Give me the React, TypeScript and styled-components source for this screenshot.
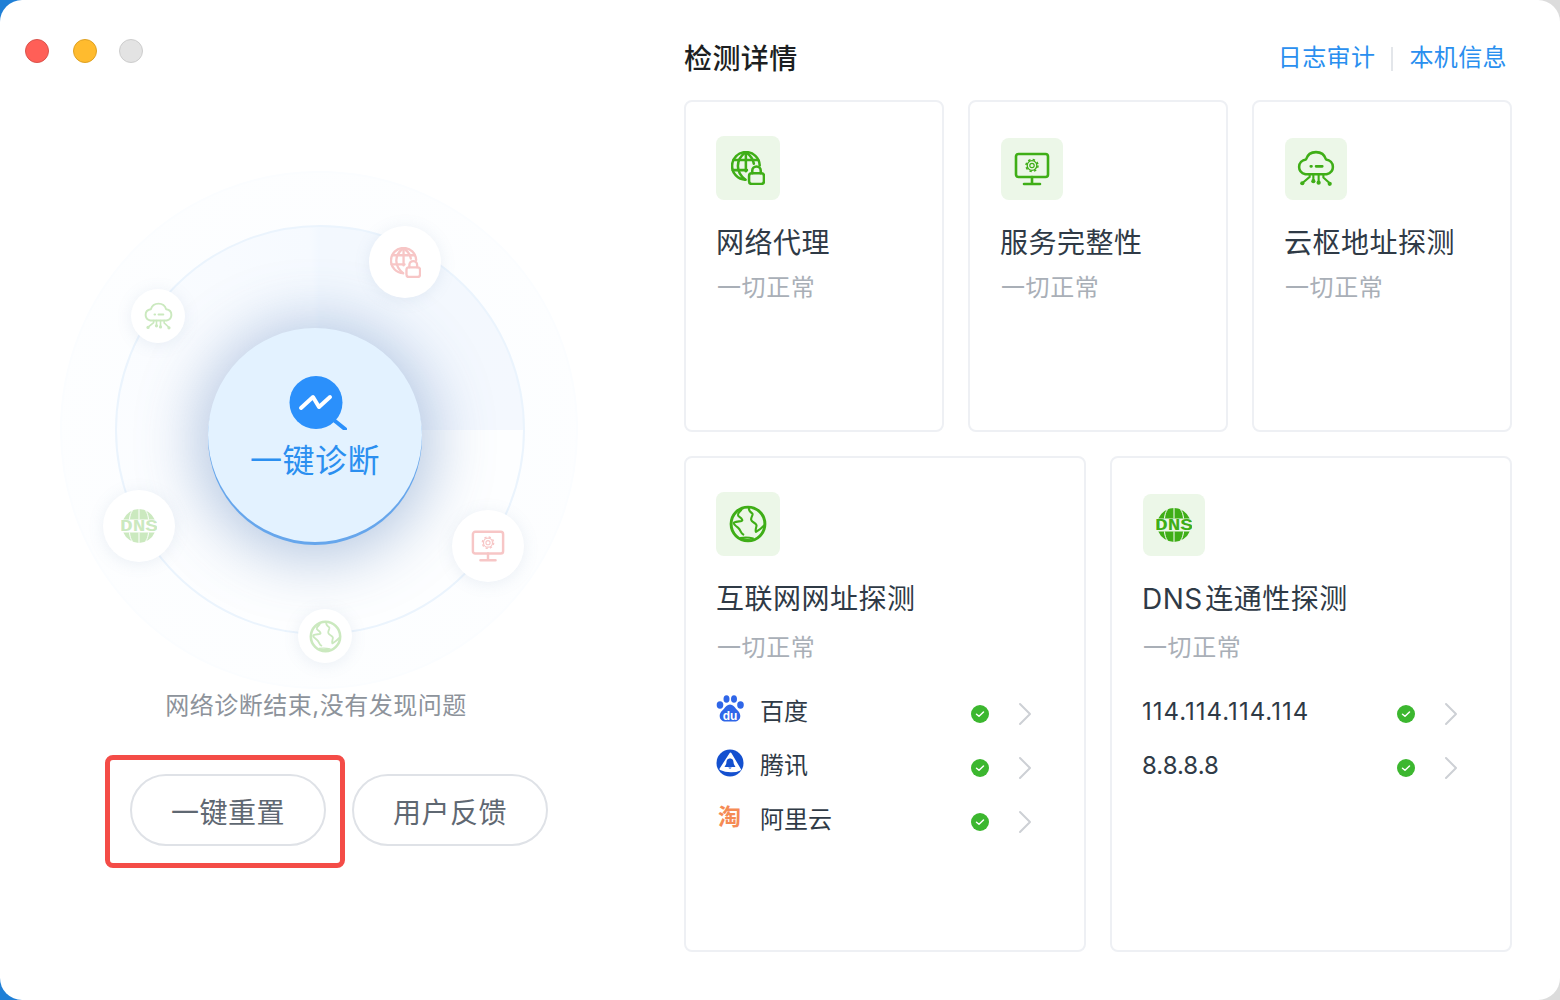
import React from "react";
import styled, { createGlobalStyle } from "styled-components";

const GREEN = "#3fae17";
const PINK = "#f7c6c6";
const PALE_GREEN = "#cbe9bf";

const GlobalStyle = createGlobalStyle`
  html, body {
    margin: 0;
    padding: 0;
    width: 1560px;
    height: 1000px;
    overflow: hidden;
    background: linear-gradient(90deg, #1f7fd6 0 50%, #dcdcdc 50% 100%);
    font-family: Inter, "Noto Sans CJK SC", sans-serif;
  }
  * { box-sizing: border-box; }
`;

type IconProps = { size: number; color: string };

const GlobeLockIcon = ({ size, color }: IconProps) => (
  <svg width={size} height={size} viewBox="0 0 32 32" fill="none" stroke={color} strokeWidth="2.4" strokeLinecap="round" strokeLinejoin="round">
    <path d="M27 13.5A13 13 0 1 0 13.5 27" />
    <path d="M14 1C8.5 5 6.5 9.5 6.5 14s2 9 7 13" />
    <path d="M14 1c4.5 3.5 7 7 7.5 11" />
    <path d="M14 1v18" />
    <path d="M2.5 8.5h23M1.5 18H15" />
    <rect x="17" y="21" width="14" height="10" rx="2.5" />
    <path d="M20 21v-2.5a4 4 0 0 1 8 0V21" />
  </svg>
);

const MonitorIcon = ({ size, color }: IconProps) => (
  <svg width={size} height={size} viewBox="0 0 36 36" fill="none" stroke={color} strokeWidth="2.6" strokeLinecap="round" strokeLinejoin="round">
    <rect x="2" y="3" width="32" height="23" rx="2.5" />
    <path d="M18 26v6M10 33h16" />
    <circle cx="18" cy="14.5" r="2.2" strokeWidth="1.2" />
    <circle cx="18" cy="14.5" r="4.8" strokeWidth="1.3" />
    <circle cx="18" cy="14.5" r="6" strokeWidth="1.5" strokeLinecap="butt" strokeDasharray="2.4 2.31" />
  </svg>
);

const CloudIcon = ({ size, color }: IconProps) => (
  <svg width={size} height={size} viewBox="0 0 36 36" fill="none" stroke={color} strokeWidth="2.4" strokeLinecap="round" strokeLinejoin="round">
    <path d="M8 23C4.500 22 2 19.500 2 16c0-3.700 2.800-6.500 6.500-7C9.800 4.800 13.500 2 18 2s8.200 2.800 9.500 7c3.700.5 6.500 3.300 6.500 7 0 3.500-2.500 6-6 7H8z" />
    <path d="M13 15.500h.8M18 15.500h6" />
    <path d="M12 23v2.500L5.500 31M15.500 23v6M20.500 23v7M25 23v3l5.500 5" strokeWidth="2" />
    <circle cx="5" cy="31.500" r="2" fill={color} stroke="none" />
    <circle cx="15.500" cy="29.500" r="2" fill={color} stroke="none" />
    <circle cx="20.500" cy="31" r="2" fill={color} stroke="none" />
    <circle cx="31" cy="32" r="2" fill={color} stroke="none" />
  </svg>
);

const EarthIcon = ({ size, color }: IconProps) => (
  <svg width={size} height={size} viewBox="0 0 36 36" fill="none" stroke={color} strokeLinecap="round" strokeLinejoin="round">
    <circle cx="18" cy="18" r="16" strokeWidth="2.8" />
    <path d="M12 3.500c-.500 2.500-3 3-3.500 5.500-.500 2.200 3 2.500 4 5 .800 2-4.500 1-7.500 2.500-1.500 1 1 3 3.500 5 3 2.500 2.500 5.500 5 6.500" strokeWidth="2" />
    <path d="M19 2.500c-1 2.500 1 4 3 5.500 1.500 1-1.500 3.500-1 6 .500 2.500 4 2.500 5 5 .500 1.500-1.500 4-.500 6.500 1.500-1 5-3 7.500-6" strokeWidth="2" />
    <path d="M11 31c3 1.500 8 1.800 12 .5-3-.8-8-1.200-12-.5z" strokeWidth="1.400" />
  </svg>
);

const DnsIcon = ({ size, color }: IconProps) => (
  <svg width={size} height={size} viewBox="0 0 36 36">
    <path d="M2.300 11.500a17 17 0 0 1 31.400 0z" fill={color} />
    <path d="M2.300 24.500a17 17 0 0 0 31.400 0z" fill={color} />
    <path d="M18 1v10.500M18 24.500V35M11.500 2.500C9.500 5 8.800 8 8.500 11.500M24.500 2.500c2 2.500 2.700 5.500 3 9M11.500 33.500c-2-2.500-2.700-5.500-3-9M24.500 33.500c2-2.500 2.700-5.500 3-9" fill="none" stroke="#fff" strokeWidth="1" />
    <text x="-1" y="23.200" textLength="38" lengthAdjust="spacingAndGlyphs" fontFamily="'Liberation Mono', monospace" fontWeight="700" fontSize="16" fill={color}>DNS</text>
  </svg>
);

const BaiduLogo = () => (
  <svg width="28" height="28" viewBox="0 0 28 28">
    <g fill="#2f66e8">
      <ellipse cx="4" cy="10" rx="3.300" ry="3.700" />
      <ellipse cx="10.500" cy="4" rx="3" ry="3.800" />
      <ellipse cx="18" cy="4" rx="3" ry="3.800" />
      <ellipse cx="24.500" cy="10" rx="3.300" ry="3.700" />
      <path d="M14 9.500c3 0 4.500 2.300 6 4.200 1.800 2 4.300 3.800 4.300 7.300 0 3.600-2.800 5.500-5.800 5.500H9.500c-3 0-5.800-1.900-5.800-5.500 0-3.500 2.500-5.300 4.300-7.300C9.500 11.800 11 9.500 14 9.500z" />
    </g>
    <text x="14" y="24.500" textAnchor="middle" fontFamily="'Liberation Sans', sans-serif" fontWeight="700" fontSize="12" fill="#fff">du</text>
  </svg>
);

const TencentLogo = () => (
  <svg width="28" height="28" viewBox="0 0 28 28">
    <circle cx="14" cy="14" r="13.500" fill="#1450cf" />
    <path d="M14.500 4.500 24 20.500c-5 2.500-13 2.500-19.500-.5z" fill="#fff" strokeLinejoin="round" stroke="#fff" strokeWidth="2" />
    <path d="M14 9.500c2.800 0 3.500 2.200 3.600 4.300.1 1.700 1.300 2.800 1.900 4.200h-11c.6-1.400 1.800-2.500 1.900-4.200.1-2.100.8-4.300 3.600-4.300z" fill="#1450cf" />
    <path d="M14 18.500h-1.500c0 1.500 3 1.500 3 0z" fill="#1450cf" />
  </svg>
);

const CheckBadge = () => (
  <CheckIconWrap viewBox="0 0 18 18">
    <circle cx="9" cy="9" r="9" fill="#3cb72f" />
    <path d="M5.500 9.200 8 11.300l4.500-4.300" fill="none" stroke="#fff" strokeWidth="1.500" strokeLinecap="round" strokeLinejoin="round" />
  </CheckIconWrap>
);

const Chevron = () => (
  <ChevronIcon viewBox="0 0 16 24">
    <path d="M3 2l10 10L3 22" fill="none" stroke="#cdd0d5" strokeWidth="2" strokeLinecap="round" strokeLinejoin="round" />
  </ChevronIcon>
);

const Window = styled.div`
  display: flex;
  width: 1560px;
  height: 1000px;
  background: #fff;
  border-radius: 22px;
  overflow: hidden;
`;

const LeftPanel = styled.section`
  display: flex;
  flex-direction: column;
  width: 632px;
`;

const TitleBar = styled.div`
  display: flex;
  gap: 24px;
  height: 171px;
  padding: 39px 0 0 25px;
`;

const Light = styled.span<{ $bg: string; $edge: string; $pull?: boolean }>`
  width: 24px;
  height: 24px;
  border-radius: 50%;
  background: ${({ $bg }) => $bg};
  border: 1px solid ${({ $edge }) => $edge};
  margin-left: ${({ $pull }) => ($pull ? "-2px" : "0")};
`;

const Canvas = styled.div`
  position: relative;
  width: 518px;
  height: 518px;
  margin-left: 60px;
  border-radius: 50%;
  border: 2px solid #fbfdff;
  background: radial-gradient(circle, #fbfdff 0%, #fdfeff 80%, #fff 100%);
`;

const Ring = styled.div`
  position: absolute;
  left: 53px;
  top: 52px;
  width: 410px;
  height: 410px;
  border-radius: 50%;
  border: 2px solid #ebf4fd;
  background: conic-gradient(#f3f8fe 0deg, #f4f8fe 90deg, #fdfeff 90deg, #fdfeff 200deg, #fafcff 300deg, #f6faff 357deg, #f2f8ff 360deg);
`;

const CenterButton = styled.button`
  position: absolute;
  left: 146px;
  top: 155px;
  width: 214px;
  height: 214px;
  display: flex;
  flex-direction: column;
  align-items: center;
  padding: 48px 0 0;
  border: 0;
  border-radius: 50%;
  background: #e3f2ff;
  box-shadow: 0 3px 0 #66a6ec, 0 6px 60px 12px rgba(70, 115, 180, 0.38);
  font-family: inherit;

  svg {
    margin-left: 5px;
  }
`;

const CenterLabel = styled.span`
  margin-top: 8px;
  font-size: 32px;
  line-height: 46px;
  letter-spacing: 0.5px;
  color: #2b8ff0;
`;

const Node = styled.div<{ $x: number; $y: number; $d: number }>`
  position: absolute;
  left: ${({ $x, $d }) => $x - $d / 2}px;
  top: ${({ $y, $d }) => $y - $d / 2}px;
  width: ${({ $d }) => $d}px;
  height: ${({ $d }) => $d}px;
  display: flex;
  align-items: center;
  justify-content: center;
  border-radius: 50%;
  background: #fff;
  box-shadow: 0 2px 16px rgba(110, 140, 180, 0.13);
`;

const StatusText = styled.p`
  margin: -1px 0 0;
  text-align: center;
  font-size: 24px;
  line-height: 36px;
  letter-spacing: 0.5px;
  color: #8d939b;
`;

const ButtonRow = styled.div`
  display: flex;
  gap: 26px;
  margin: 50px 0 0 130px;
`;

const ButtonSlot = styled.div`
  position: relative;
`;

const PillButton = styled.button`
  width: 196px;
  height: 72px;
  padding: 2px 0 0;
  border: 2px solid #dfe2e7;
  border-radius: 36px;
  background: #fff;
  font-family: inherit;
  font-size: 28px;
  letter-spacing: 0.5px;
  color: #5f6872;
`;

const Highlight = styled.div`
  position: absolute;
  left: -25px;
  top: -19px;
  width: 240px;
  height: 113px;
  border: 5px solid #f44c47;
  border-radius: 8px;
  pointer-events: none;
`;

const RightPanel = styled.section`
  width: 828px;
  margin-left: 52px;
  padding-top: 38px;
`;

const Header = styled.header`
  display: flex;
  align-items: center;
  height: 62px;
  padding: 1px 5px 21px 0;
`;

const Heading = styled.h1`
  flex: 1;
  margin: 0;
  font-size: 28px;
  line-height: 40px;
  font-weight: 500;
  letter-spacing: 0.4px;
  color: #1d1f22;
`;

const HeaderLink = styled.a`
  margin-bottom: 2px;
  font-size: 24px;
  line-height: 36px;
  letter-spacing: 0.4px;
  color: #2a8fef;
`;

const LinkDivider = styled.span`
  width: 2px;
  height: 24px;
  margin: 0 16px;
  background: #e3e6ea;
`;

const CardGrid = styled.div<{ $cols: number; $height: number }>`
  display: grid;
  grid-template-columns: repeat(${({ $cols }) => $cols}, 1fr);
  gap: 24px;
  height: ${({ $height }) => $height}px;
  margin-bottom: 24px;
`;

const Card = styled.article`
  padding: 34px 30px 0;
  border: 2px solid #eef0f4;
  border-radius: 8px;
  background: #fff;
`;

const Tile = styled.div<{ $small?: boolean }>`
  display: flex;
  align-items: center;
  justify-content: center;
  width: ${({ $small }) => ($small ? 62 : 64)}px;
  height: ${({ $small }) => ($small ? 62 : 64)}px;
  margin: ${({ $small }) => ($small ? "2px 0 0 1px" : "0")};
  border-radius: 8px;
  background: #ecf7e8;
`;

const CardTitle = styled.h2`
  margin: 23px 0 0;
  font-size: 28px;
  line-height: 40px;
  font-weight: 400;
  letter-spacing: 0.5px;
  word-spacing: -6px;
  color: #2f3a46;
  white-space: nowrap;
`;

const CardStatus = styled.p<{ $wide?: boolean }>`
  margin: ${({ $wide }) => ($wide ? "11px 0 0 1px" : "7px 0 0 1px")};
  font-size: 24px;
  line-height: 36px;
  letter-spacing: 0.6px;
  color: #a9afb7;
`;

const RowList = styled.ul`
  width: 317px;
  margin: 19px 0 0;
  padding: 0;
  list-style: none;
`;

const Row = styled.li`
  display: flex;
  align-items: center;
  height: 54px;
`;

const RowLogo = styled.span`
  display: flex;
  width: 44px;
  height: 28px;
  margin-top: -6px;
`;

const TaobaoMark = styled.span`
  margin-left: 2px;
  font-size: 23px;
  line-height: 28px;
  font-weight: 700;
  color: #f58b55;
`;

const RowName = styled.span<{ $spread?: boolean }>`
  flex: 1;
  font-size: 24px;
  line-height: 36px;
  letter-spacing: ${({ $spread }) => ($spread ? "1px" : "0")};
  color: #2f3a46;
`;

const CheckIconWrap = styled.svg`
  width: 18px;
  height: 18px;
  margin: 3px 28px 0 0;
`;

const ChevronIcon = styled.svg`
  width: 16px;
  height: 24px;
  margin-top: 3px;
`;

const topCards = [
  { title: "网络代理", icon: <GlobeLockIcon size={34} color={GREEN} />, small: false },
  { title: "服务完整性", icon: <MonitorIcon size={36} color={GREEN} />, small: true },
  { title: "云枢地址探测", icon: <CloudIcon size={38} color={GREEN} />, small: true },
];

const siteRows = [
  { name: "百度", logo: <BaiduLogo /> },
  { name: "腾讯", logo: <TencentLogo /> },
  { name: "阿里云", logo: <TaobaoMark>淘</TaobaoMark> },
];

const dnsRows = [
  { ip: "114.114.114.114", spread: true },
  { ip: "8.8.8.8", spread: false },
];

export default function App() {
  return (
    <>
      <GlobalStyle />
      <Window>
        <LeftPanel>
          <TitleBar>
            <Light $bg="#ff5f57" $edge="#d9534c" />
            <Light $bg="#ffbb2e" $edge="#dea123" />
            <Light $bg="#e3e3e3" $edge="#cdcdcd" $pull />
          </TitleBar>
          <Canvas>
            <Ring />
            <CenterButton>
              <svg width="58" height="54" viewBox="0 0 58 54">
                <circle cx="27" cy="26.500" r="26.500" fill="#2b90fb" />
                <path d="M46 45l10 8" stroke="#2b90fb" strokeWidth="4" strokeLinecap="round" />
                <path d="M12 32l12-11 6 10 11-10" fill="none" stroke="#fff" strokeWidth="4" strokeLinecap="round" strokeLinejoin="round" />
              </svg>
              <CenterLabel>一键诊断</CenterLabel>
            </CenterButton>
            <Node $x={343} $y={89} $d={72}>
              <GlobeLockIcon size={31} color={PINK} />
            </Node>
            <Node $x={96} $y={143} $d={54}>
              <CloudIcon size={29} color={PALE_GREEN} />
            </Node>
            <Node $x={77} $y={353} $d={72}>
              <DnsIcon size={36} color={PALE_GREEN} />
            </Node>
            <Node $x={426} $y={373} $d={72}>
              <MonitorIcon size={34} color={PINK} />
            </Node>
            <Node $x={263} $y={463} $d={54}>
              <EarthIcon size={33} color={PALE_GREEN} />
            </Node>
          </Canvas>
          <StatusText>网络诊断结束,没有发现问题</StatusText>
          <ButtonRow>
            <ButtonSlot>
              <PillButton>一键重置</PillButton>
              <Highlight />
            </ButtonSlot>
            <ButtonSlot>
              <PillButton>用户反馈</PillButton>
            </ButtonSlot>
          </ButtonRow>
        </LeftPanel>
        <RightPanel>
          <Header>
            <Heading>检测详情</Heading>
            <HeaderLink>日志审计</HeaderLink>
            <LinkDivider />
            <HeaderLink>本机信息</HeaderLink>
          </Header>
          <CardGrid $cols={3} $height={332}>
            {topCards.map((card) => (
              <Card key={card.title}>
                <Tile $small={card.small}>{card.icon}</Tile>
                <CardTitle>{card.title}</CardTitle>
                <CardStatus>一切正常</CardStatus>
              </Card>
            ))}
          </CardGrid>
          <CardGrid $cols={2} $height={496}>
            <Card>
              <Tile>
                <EarthIcon size={38} color={GREEN} />
              </Tile>
              <CardTitle>互联网网址探测</CardTitle>
              <CardStatus $wide>一切正常</CardStatus>
              <RowList>
                {siteRows.map((row) => (
                  <Row key={row.name}>
                    <RowLogo>{row.logo}</RowLogo>
                    <RowName>{row.name}</RowName>
                    <CheckBadge />
                    <Chevron />
                  </Row>
                ))}
              </RowList>
            </Card>
            <Card>
              <Tile $small>
                <DnsIcon size={36} color={GREEN} />
              </Tile>
              <CardTitle>DNS 连通性探测</CardTitle>
              <CardStatus $wide>一切正常</CardStatus>
              <RowList>
                {dnsRows.map((row) => (
                  <Row key={row.ip}>
                    <RowName $spread={row.spread}>{row.ip}</RowName>
                    <CheckBadge />
                    <Chevron />
                  </Row>
                ))}
              </RowList>
            </Card>
          </CardGrid>
        </RightPanel>
      </Window>
    </>
  );
}
